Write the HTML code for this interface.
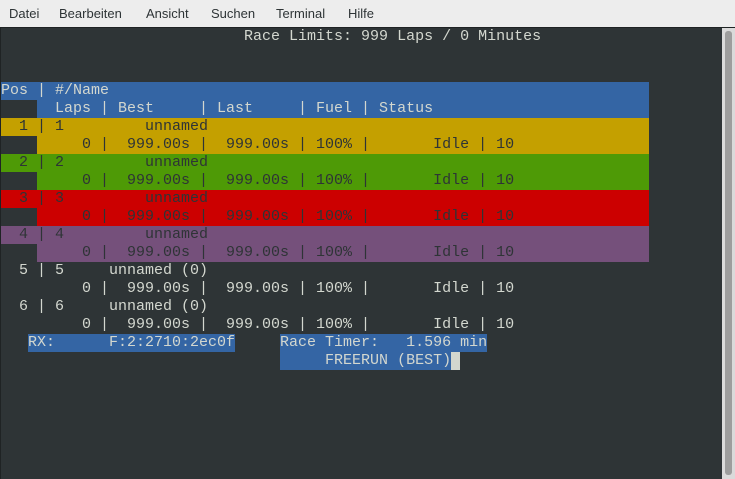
<!DOCTYPE html>
<html><head><meta charset="utf-8"><style>
*{margin:0;padding:0}
body{width:735px;height:479px;overflow:hidden;background:#ededed;position:relative;font-family:"Liberation Sans",sans-serif}
.menu{position:absolute;top:0;left:0;width:735px;height:27px;background:#ededed;border-bottom:1px solid #1f2324}
.menu span{position:absolute;top:6px;font-size:13px;color:#2e3436}
.term{position:absolute;left:0;top:28px;width:721px;height:451px;background:#2e3436;border-left:1px solid #1f2324}
.sb{position:absolute;left:722px;top:28px;width:13px;height:451px;background:#dadada}
.thumb{position:absolute;left:3px;top:3px;width:7px;height:444px;background:#9d9d9d;border-radius:3px}
.b{position:absolute;height:18px}
pre{position:absolute;left:1px;font-family:"Liberation Mono",monospace;font-size:15px;line-height:18px;color:#d3d7cf;white-space:pre;height:18px}
.d{color:#2e3436}
</style></head><body>
<div class="menu"><span style="left:9px">Datei</span><span style="left:59px">Bearbeiten</span><span style="left:146px">Ansicht</span><span style="left:211px">Suchen</span><span style="left:276px">Terminal</span><span style="left:348px">Hilfe</span></div>
<div class="term"></div>
<div class="sb"><div class="thumb"></div></div>

<div class="b" style="left:1px;top:82px;width:648px;background:#3465a4"></div>
<div class="b" style="left:37px;top:100px;width:612px;background:#3465a4"></div>
<div class="b" style="left:1px;top:118px;width:648px;background:#c4a000"></div>
<div class="b" style="left:37px;top:136px;width:612px;background:#c4a000"></div>
<div class="b" style="left:1px;top:154px;width:648px;background:#4e9a06"></div>
<div class="b" style="left:37px;top:172px;width:612px;background:#4e9a06"></div>
<div class="b" style="left:1px;top:190px;width:648px;background:#cc0000"></div>
<div class="b" style="left:37px;top:208px;width:612px;background:#cc0000"></div>
<div class="b" style="left:1px;top:226px;width:648px;background:#75507b"></div>
<div class="b" style="left:37px;top:244px;width:612px;background:#75507b"></div>
<div class="b" style="left:28px;top:334px;width:207px;background:#3465a4"></div>
<div class="b" style="left:280px;top:334px;width:207px;background:#3465a4"></div>
<div class="b" style="left:280px;top:352px;width:171px;background:#3465a4"></div>
<div class="b" style="left:451px;top:352px;width:9px;background:#d3d7cf"></div>

<pre style="top:28px">                           Race Limits: 999 Laps / 0 Minutes</pre>
<pre style="top:82px">Pos | #/Name</pre>
<pre style="top:100px">      Laps | Best     | Last     | Fuel | Status</pre>
<pre class="d" style="top:118px">  1 | 1         unnamed</pre>
<pre class="d" style="top:136px">         0 |  999.00s |  999.00s | 100% |       Idle | 10</pre>
<pre class="d" style="top:154px">  2 | 2         unnamed</pre>
<pre class="d" style="top:172px">         0 |  999.00s |  999.00s | 100% |       Idle | 10</pre>
<pre class="d" style="top:190px">  3 | 3         unnamed</pre>
<pre class="d" style="top:208px">         0 |  999.00s |  999.00s | 100% |       Idle | 10</pre>
<pre class="d" style="top:226px">  4 | 4         unnamed</pre>
<pre class="d" style="top:244px">         0 |  999.00s |  999.00s | 100% |       Idle | 10</pre>
<pre style="top:262px">  5 | 5     unnamed (0)</pre>
<pre style="top:280px">         0 |  999.00s |  999.00s | 100% |       Idle | 10</pre>
<pre style="top:298px">  6 | 6     unnamed (0)</pre>
<pre style="top:316px">         0 |  999.00s |  999.00s | 100% |       Idle | 10</pre>
<pre style="top:334px">   RX:      F:2:2710:2ec0f     Race Timer:   1.596 min</pre>
<pre style="top:352px">                                    FREERUN (BEST)</pre>
</body></html>
